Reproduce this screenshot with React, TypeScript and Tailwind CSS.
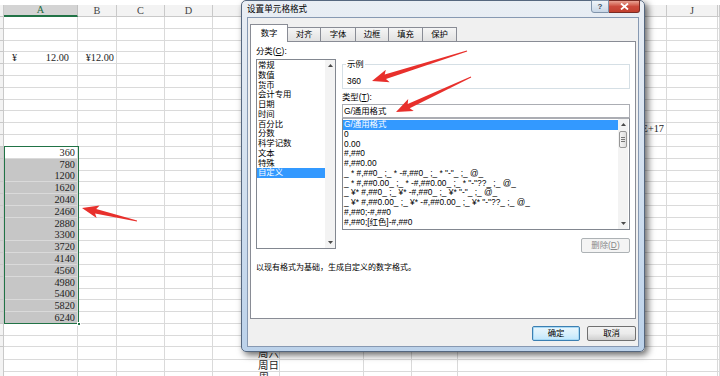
import React from "react";

const GRID =
  "grid grid-cols-[4px_74px_39px_48px_48px_67px_84px_48px_46px_209px_51px_1fr]";

const LETTERS = ["", "A", "B", "C", "D", "", "", "", "", "", "J", ""];
const SEL_VALUES = [360, 780, 1200, 1620, 2040, 2460, 2880, 3300, 3720, 4140, 4560, 4980, 5400, 5820, 6240];
const SEL_START = 11;

const CATS = ["常规", "数值", "货币", "会计专用", "日期", "时间", "百分比", "分数", "科学记数", "文本", "特殊", "自定义"];
const TYPES = [
  "G/通用格式",
  "0",
  "0.00",
  "#,##0",
  "#,##0.00",
  '_ * #,##0_ ;_ * -#,##0_ ;_ * "-"_ ;_ @_',
  '_ * #,##0.00_ ;_ * -#,##0.00_ ;_ * "-"??_ ;_ @_',
  '_ ¥* #,##0_ ;_ ¥* -#,##0_ ;_ ¥* "-"_ ;_ @_',
  '_ ¥* #,##0.00_ ;_ ¥* -#,##0.00_ ;_ ¥* "-"??_ ;_ @_',
  "#,##0;-#,##0",
  "#,##0;[红色]-#,##0",
];

function cellContent(r: number, c: number) {
  if (r === 3 && c === 1)
    return (
      <div className="flex justify-between pl-[8px] pr-[8px]">
        <span>¥</span>
        <span>12.00</span>
      </div>
    );
  if (r === 3 && c === 2) return <div className="pr-[2px] text-right">¥12.00</div>;
  if (c === 1 && r >= SEL_START && r < SEL_START + SEL_VALUES.length)
    return <div className="pr-[2px] text-right">{SEL_VALUES[r - SEL_START]}</div>;
  if (r === 9 && c === 9) return <div className="pr-[2px] text-right">1.23457E+17</div>;
  if (c === 5 && r === 28)
    return <div className="text-right font-['Noto_Sans_CJK_SC',sans-serif] text-[10.5px] leading-[11.8px]">周六</div>;
  if (c === 5 && r === 29)
    return <div className="text-right font-['Noto_Sans_CJK_SC',sans-serif] text-[10.5px] leading-[11.8px]">周日</div>;
  if (c === 5 && r === 30)
    return <div className="pr-[10px] text-right font-['Noto_Sans_CJK_SC',sans-serif] text-[10.5px] leading-[11.8px]">周</div>;
  return null;
}

function Sheet() {
  const rows = Array.from({ length: 31 }, (_, i) => i);
  return (
    <div className="font-['Liberation_Serif','Noto_Sans_CJK_SC',serif] text-[10.3px] text-[#1e1e1e]">
      <div className="h-[5px]" />
      <div className={`${GRID} h-[12px]`}>
        {LETTERS.map((l, i) =>
          i === 1 ? (
            <div
              key={i}
              className="flex items-center justify-center border-r border-b-2 border-r-[#c0c0c0] border-b-[#217346] bg-[#d4d4d4] leading-none text-[#1d6a40]"
            >
              {l}
            </div>
          ) : (
            <div
              key={i}
              className="flex items-center justify-center border-r border-b border-[#c9c9c9] bg-[#f3f3f3] leading-none text-[#444]"
            >
              {l}
            </div>
          )
        )}
      </div>
      {rows.map((r) => {
        const selRow = r >= SEL_START && r < SEL_START + SEL_VALUES.length;
        return (
          <div key={r} className={`${GRID} h-[11.8px]`}>
            {LETTERS.map((_, c) => {
              if (c === 0)
                return (
                  <div
                    key={c}
                    className={
                      selRow
                        ? "border-r border-b border-[#c9c9c9] bg-[#d4d4d4]"
                        : "border-r border-b border-[#c9c9c9] bg-[#f3f3f3]"
                    }
                  />
                );
              let cls = "overflow-visible whitespace-nowrap border-r border-b border-[#dadada] leading-[11px]";
              if (c === 1 && selRow && r !== SEL_START) cls += " bg-[#c6c6c6]";
              return (
                <div key={c} className={cls}>
                  {cellContent(r, c)}
                </div>
              );
            })}
          </div>
        );
      })}
      {/* selection outline */}
      <div className="absolute left-[4px] top-[146px] h-[178px] w-[75px] border-[1.5px] border-[#217346]">
        <div className="absolute -bottom-[3px] -right-[3px] h-[4px] w-[4px] border border-white bg-[#217346]" />
      </div>
    </div>
  );
}

function UpArrow() {
  return (
    <svg width="5" height="3" viewBox="0 0 5 3">
      <path d="M0 3 L2.5 0 L5 3Z" fill="#4a4a4a" />
    </svg>
  );
}
function DownArrow() {
  return (
    <svg width="5" height="3" viewBox="0 0 5 3">
      <path d="M0 0 L2.5 3 L5 0Z" fill="#4a4a4a" />
    </svg>
  );
}

function VScroll({ thumb }: { thumb?: boolean }) {
  return (
    <div className="flex h-full w-[10px] flex-col bg-[#f3f3f3]">
      <div className="flex h-[11px] items-center justify-center">
        <UpArrow />
      </div>
      {thumb && (
        <div className="mx-[1px] mt-[1px] flex h-[17px] flex-col items-center justify-center gap-[1px] rounded-[2px] border border-[#979797] bg-gradient-to-r from-[#f4f4f4] to-[#dedede]">
          <div className="h-px w-[4px] bg-[#777]" />
          <div className="h-px w-[4px] bg-[#777]" />
          <div className="h-px w-[4px] bg-[#777]" />
        </div>
      )}
      <div className="flex-1" />
      <div className="flex h-[11px] items-center justify-center">
        <DownArrow />
      </div>
    </div>
  );
}

function Dialog() {
  const tabs = [
    { t: "数字", w: "w-[38px]" },
    { t: "对齐", w: "w-[34px]" },
    { t: "字体", w: "w-[36px]" },
    { t: "边框", w: "w-[34px]" },
    { t: "填充", w: "w-[35px]" },
    { t: "保护", w: "w-[35px]" },
  ];
  return (
    <div className="absolute left-[241px] top-0 h-[352px] w-[404px] rounded-[5px] border border-[#55677f] bg-gradient-to-b from-[#e9eef4] to-[#bcd2ea] font-['Liberation_Sans','Noto_Sans_CJK_SC',sans-serif] text-[8.4px] text-black shadow-[3px_3px_7px_rgba(0,0,0,0.6)]">
      <div className="flex h-[16px] items-center pl-[5px] pt-[1px] text-[8.6px]">设置单元格格式</div>
      <div className="absolute right-[4px] top-[-1px] flex">
        <div className="flex h-[13px] w-[18px] items-center justify-center rounded-bl-[3px] border border-[#8194ab] bg-gradient-to-b from-[#f1f5f9] to-[#c8d6e6] text-[8px] font-bold text-[#3b4a5e]">
          ?
        </div>
        <div className="flex h-[13px] w-[31px] items-center justify-center rounded-br-[3px] border border-l-0 border-[#7a2b24] bg-gradient-to-b from-[#e8a294] via-[#cc4a3c] to-[#c2402f]">
          <svg width="9" height="7" viewBox="0 0 9 7">
            <path d="M1 0.5 L8 6.5 M8 0.5 L1 6.5" stroke="white" strokeWidth="1.8" />
          </svg>
        </div>
      </div>
      <div className="mx-[5px] flex h-[330px] flex-col border border-[#8799b2] bg-[#f0f0f0] px-[2px] pt-[7px]">
        <div className="relative z-10 flex h-[16px] items-end">
          {tabs.map((tb, i) =>
            i === 0 ? (
              <div
                key={i}
                className={`${tb.w} -mb-px flex h-[18px] items-center justify-center border border-b-0 border-[#898c95] bg-white pb-[1px]`}
              >
                {tb.t}
              </div>
            ) : (
              <div
                key={i}
                className={`${tb.w} -ml-px flex h-[14px] items-center justify-center border border-b-0 border-[#898c95] bg-gradient-to-b from-[#f5f5f5] to-[#e2e2e2]`}
              >
                {tb.t}
              </div>
            )
          )}
        </div>
        <div className="h-[278px] w-[386px] border border-[#898c95] bg-white">
          <div className="flex h-full flex-col px-[5px] pt-[3px]">
            <div className="flex">
              <div className="w-[80px]">
                <div className="h-[13px] leading-[13px]">
                  分类(<span className="underline">C</span>):
                </div>
                <div className="mt-[1px] flex h-[190px] border border-[#828790] bg-white">
                  <div className="flex-1 pt-[1px]">
                    {CATS.map((c, i) => (
                      <div
                        key={c}
                        className={
                          i === CATS.length - 1
                            ? "h-[9.75px] bg-[#3399ff] pl-[1px] leading-[9.75px] text-white"
                            : "h-[9.75px] pl-[1px] leading-[9.75px]"
                        }
                      >
                        {c}
                      </div>
                    ))}
                  </div>
                  <VScroll />
                </div>
              </div>
              <div className="ml-[6px] flex w-[288px] flex-col">
                <fieldset className="mt-[13px] w-full min-w-0 border border-[#d5dfe5] px-[3px]">
                  <legend className="px-[1px] leading-[12px]">示例</legend>
                  <div className="pb-[2px] pl-[1px] pt-[6px] leading-[10px]">360</div>
                </fieldset>
                <div className="mt-[2px] h-[12px] leading-[12px]">
                  类型(<span className="underline">T</span>):
                </div>
                <div className="mt-[1px] h-[14px] border border-[#abadb3] bg-white px-[1px] leading-[12px]">
                  G/通用格式
                </div>
                <div className="flex h-[112px] border border-[#828790] border-t-[#abadb3] bg-white">
                  <div className="min-w-0 flex-1 overflow-hidden pt-[1px]">
                    {TYPES.map((t, i) => (
                      <div
                        key={i}
                        className={
                          i === 0
                            ? "h-[9.75px] whitespace-pre bg-[#3399ff] pl-[1px] leading-[9.75px] text-white"
                            : "h-[9.75px] whitespace-pre pl-[1px] leading-[9.75px]"
                        }
                      >
                        {t}
                      </div>
                    ))}
                  </div>
                  <div className="w-[11px]">
                    <VScroll thumb />
                  </div>
                </div>
                <div className="mt-[8px] flex h-[15px] w-[49px] items-center justify-center self-end rounded-[2px] border border-[#adb2b5] bg-[#f4f4f4] text-[#8a8a8a]">
                  删除(<span className="underline">D</span>)
                </div>
              </div>
            </div>
            <div className="mt-[9px] leading-[12px] text-[8px]">以现有格式为基础，生成自定义的数字格式。</div>
          </div>
        </div>
        <div className="mt-[7px] flex justify-end gap-[7px]">
          <div className="flex h-[15px] w-[48px] items-center justify-center rounded-[2px] border border-[#3c7fb1] bg-gradient-to-b from-[#eaf6fd] via-[#d9f0fc] to-[#bee6fd] shadow-[inset_0_0_0_1px_#a7d9f5]">
            确定
          </div>
          <div className="flex h-[15px] w-[49px] items-center justify-center rounded-[2px] border border-[#707070] bg-gradient-to-b from-[#f2f2f2] via-[#ebebeb] to-[#cfcfcf]">
            取消
          </div>
        </div>
      </div>
    </div>
  );
}

function arrowPts(tx: number, ty: number, px: number, py: number) {
  const dx = px - tx;
  const dy = py - ty;
  const len = Math.hypot(dx, dy);
  const ux = dx / len;
  const uy = dy / len;
  const nx = -uy;
  const ny = ux;
  const hl = 14;
  const hw = 6.5;
  const sw = 2.3;
  const tw = 0.5;
  const bx = px - ux * hl;
  const by = py - uy * hl;
  const bbx = px - ux * (hl + 2.5);
  const bby = py - uy * (hl + 2.5);
  const p = [
    [tx + nx * tw, ty + ny * tw],
    [bx + nx * sw, by + ny * sw],
    [bbx + nx * hw, bby + ny * hw],
    [px, py],
    [bbx - nx * hw, bby - ny * hw],
    [bx - nx * sw, by - ny * sw],
    [tx - nx * tw, ty - ny * tw],
  ];
  return p.map((q) => `${q[0].toFixed(1)},${q[1].toFixed(1)}`).join(" ");
}

function Arrows() {
  return (
    <svg className="pointer-events-none absolute left-0 top-0" width="720" height="376" viewBox="0 0 720 376">
      <polygon points={arrowPts(137, 221, 82, 208)} fill="#e8302c" />
      <polygon points={arrowPts(467, 51, 372, 81)} fill="#e8302c" />
      <polygon points={arrowPts(471, 77, 396, 112)} fill="#e8302c" />
    </svg>
  );
}

export default function App() {
  return (
    <div className="relative h-[376px] w-[720px] overflow-hidden bg-white">
      <Sheet />
      <Dialog />
      <Arrows />
    </div>
  );
}
